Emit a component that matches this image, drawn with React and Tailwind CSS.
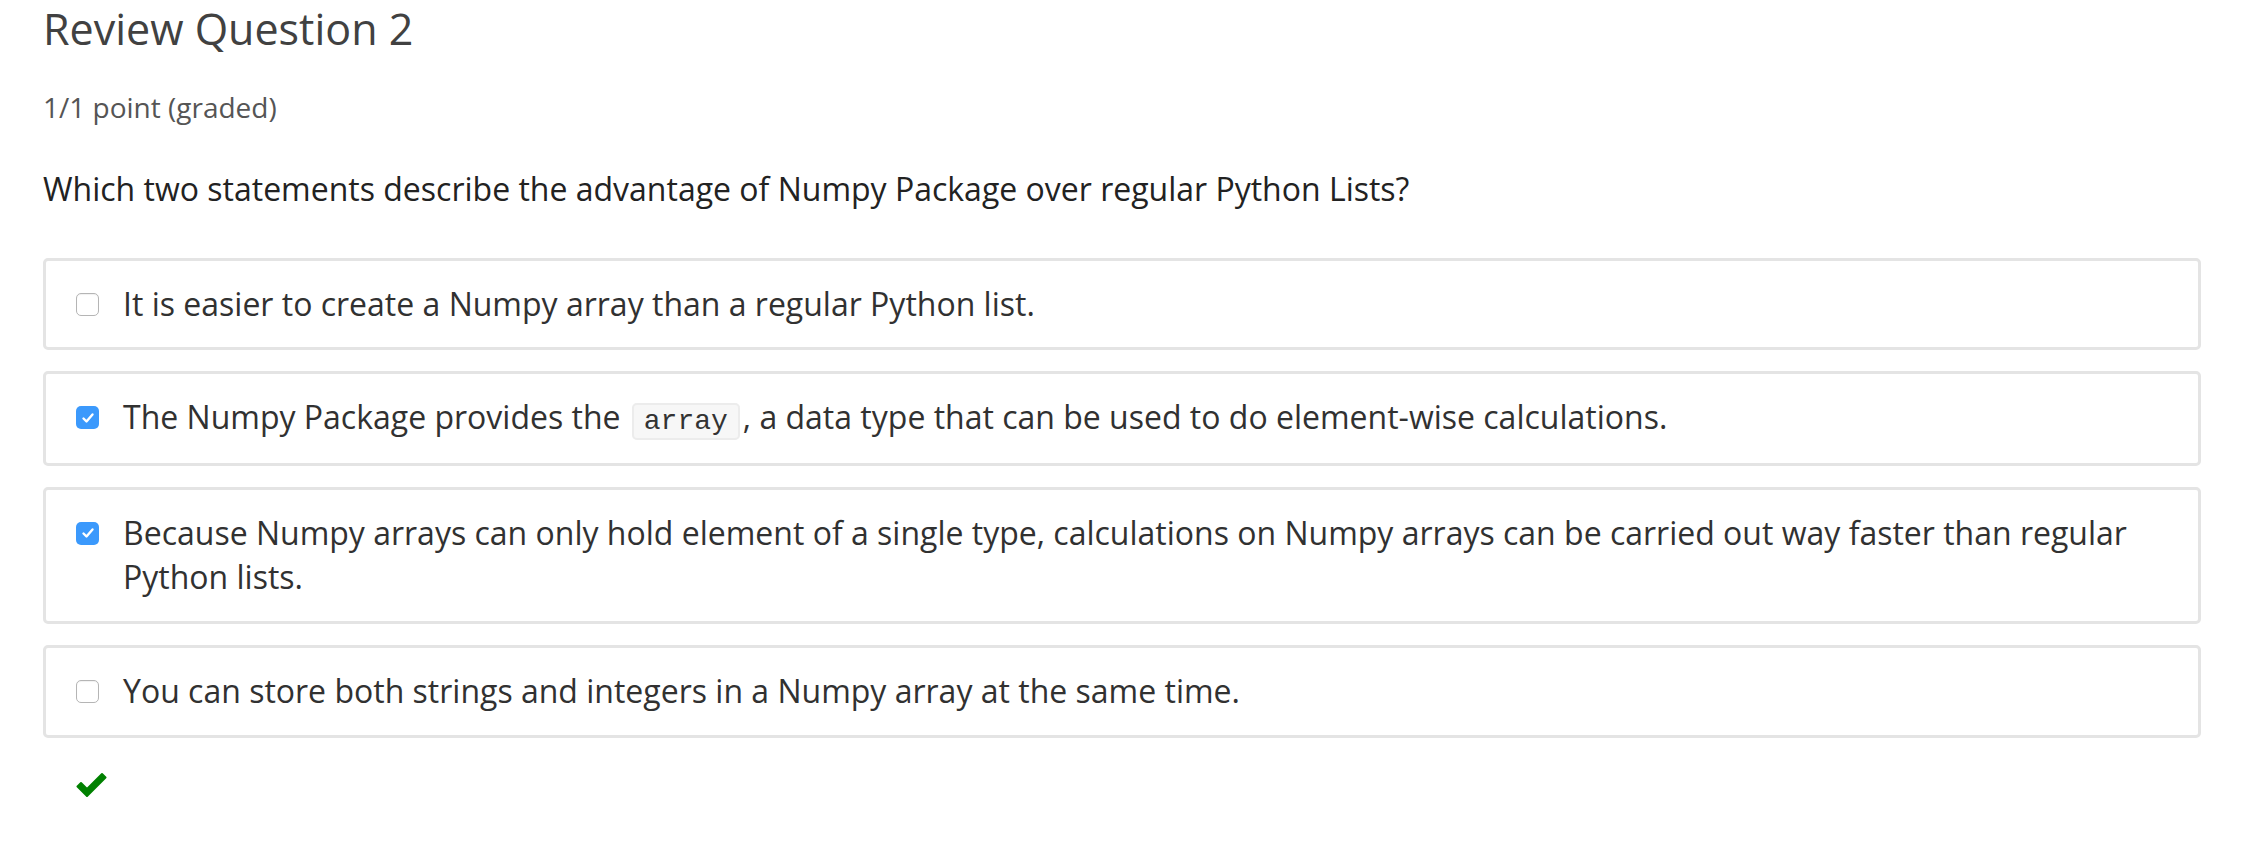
import React from 'react';

const options = [
  { id: 'a', checked: false, text: 'It is easier to create a Numpy array than a regular Python list.' },
  {
    id: 'b',
    checked: true,
    text: (
      <>
        The Numpy Package provides the{' '}
        <code className="mx-[3px] rounded-[5px] border-2 border-[#ececec] bg-[#f7f7f7] px-[10px] py-[1px] font-['Liberation_Mono',monospace] text-[28px] text-[#333]">
          array
        </code>
        , a data type that can be used to do element-wise calculations.
      </>
    ),
  },
  {
    id: 'c',
    checked: true,
    text: 'Because Numpy arrays can only hold element of a single type, calculations on Numpy arrays can be carried out way faster than regular Python lists.',
  },
  { id: 'd', checked: false, text: 'You can store both strings and integers in a Numpy array at the same time.' },
];

const Checkbox = ({ checked }) =>
  checked ? (
    <span className="mt-[11px] flex h-[23px] w-[23px] shrink-0 items-center justify-center rounded-[5px] bg-[#3b99fc]">
      <svg viewBox="0 0 16 16" className="h-[16px] w-[16px]" fill="none" stroke="white" strokeWidth="2.4" strokeLinecap="round" strokeLinejoin="round">
        <path d="M3.5 8.5l3 3 6-7" />
      </svg>
    </span>
  ) : (
    <span className="mt-[11px] block h-[23px] w-[23px] shrink-0 rounded-[5px] border border-[#b5b5b5] bg-white shadow-[inset_0_1px_1px_rgba(0,0,0,0.06)]" />
  );

export default function App() {
  return (
    <div className="min-h-screen bg-white pl-[43px] pr-[67px] font-['Open_Sans',sans-serif]">
      <h2 className="pt-[3px] text-[43px] leading-[1.2] text-[#414141]">Review Question 2</h2>
      <div className="mt-[33px] text-[28px] leading-[1.4] text-[#555]">1/1 point (graded)</div>
      <p className="mt-[40px] text-[32px] leading-[1.4] text-[#222]">
        Which two statements describe the advantage of Numpy Package over regular Python Lists?
      </p>

      <div className="mt-[46px] flex flex-col gap-[21px]">
        {options.map((o) => (
          <label
            key={o.id}
            className="flex items-start gap-[24px] rounded-[5px] border-[3px] border-[#e4e4e4] py-[21px] pl-[30px] pr-[40px] text-[32px] leading-[1.4] text-[#313131]"
          >
            <Checkbox checked={o.checked} />
            <span>{o.text}</span>
          </label>
        ))}
      </div>

      <div className="mt-[33px] pl-[32px]">
        <svg viewBox="0 0 32 26" className="h-[26px] w-[33px]">
          <path d="M2 15.5l3.5-3.5 6 6L26.5 3 30 6.5 11.5 25z" fill="#008100" strokeLinejoin="round" stroke="#008100" strokeWidth="2" />
        </svg>
      </div>
    </div>
  );
}
